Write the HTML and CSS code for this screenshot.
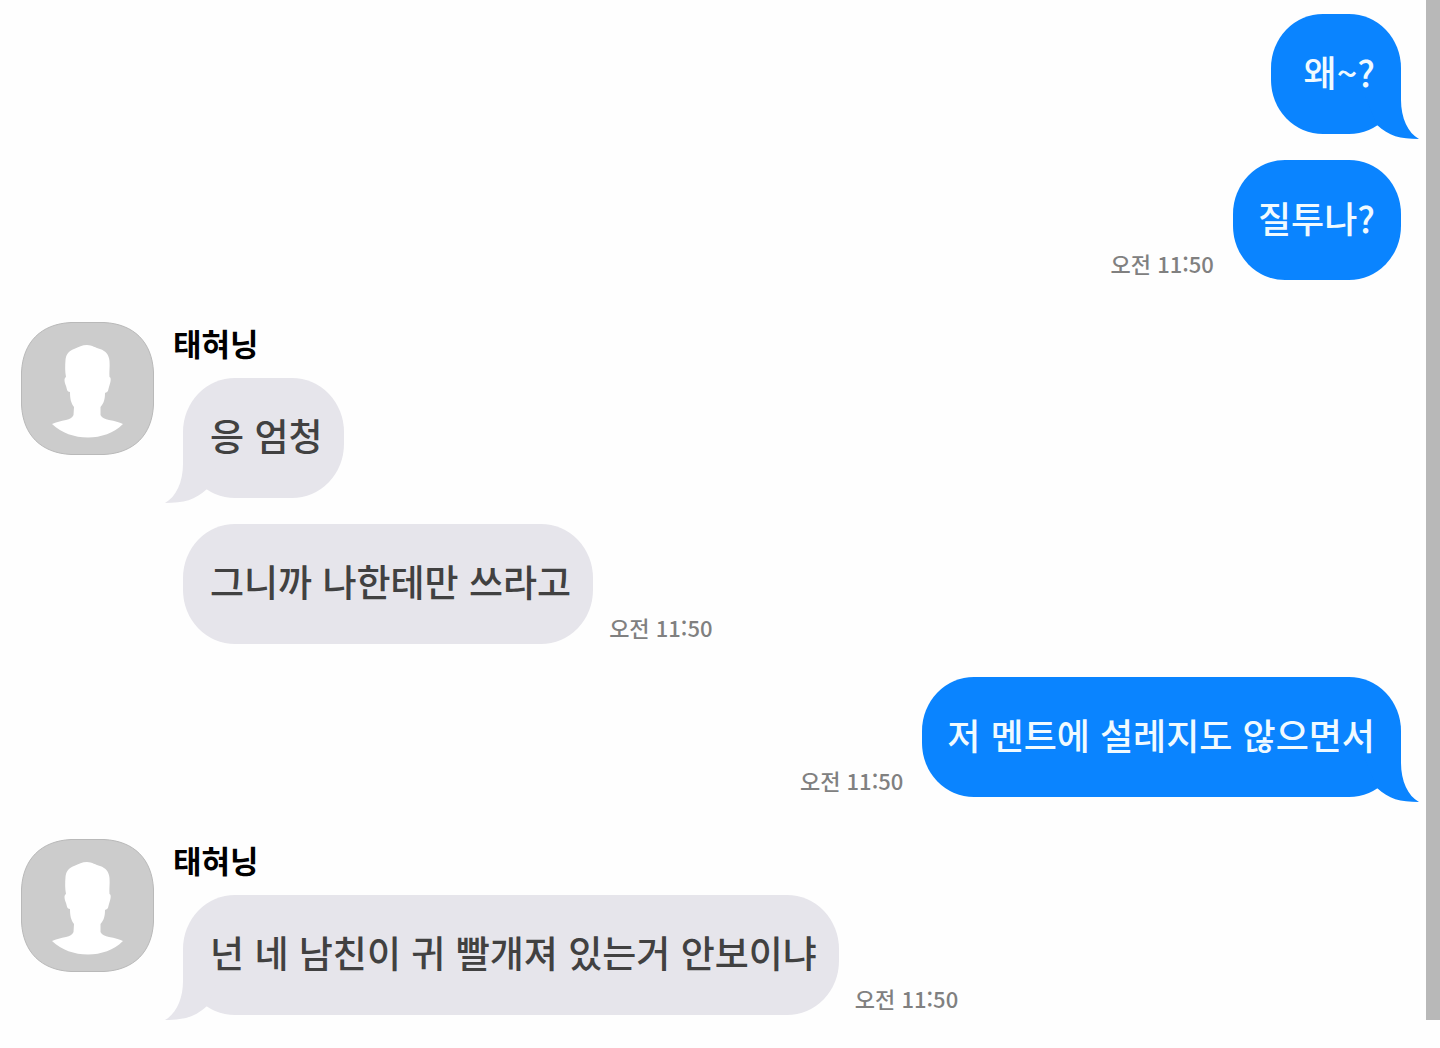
FILE: index.html
```html
<!DOCTYPE html>
<html lang="ko">
<head>
	<meta charset="UTF-8">
	<meta name="viewport" content="width=device-width, initial-scale=1">
	<title>태혀닝</title>
	<link rel="stylesheet" href="styles.css">
</head>
<body>

<!-- shared shapes -->
<svg class="defs" aria-hidden="true">
	<symbol id="tail" viewBox="0 0 54 64">
		<path d="M0 0H36V24C36 42 43 57 54 63C35 63 24 60 12 49L0 20Z"/>
	</symbol>
	<symbol id="person" viewBox="0 0 133 133">
		<path fill="#ccc" stroke="#b9b9b9" d="M50 .5H83C113 2 131 20 132.500 50V83C131 113 113 131 83 132.500H50C20 131 2 113 .5 83V50C2 20 20 2 50 .5Z"/>
		<path fill="#fff" d="M66 23C71 23 75 26 79 27C85 29 88 33 88.500 39C89 45 88 50 88.500 55C91 56 89 62 88 65C87 69 87 70 84 71C84 77 83 81 79.500 85V93C81 96 84 97 88 98C94 99 98 100 102 102C93 111 80 115.500 67 115.500C53 115.500 41 111 31 102C35 100 40 99 45 98C49 97 51 96 52.500 93L53 85C50 81 49 77 49 70C46 70 46 67 45 64C43 59 43 56 45 55C44 50 44 44 44.500 38C45 32 48 29 53 27C58 25 61 23 66 23Z"/>
	</symbol>
</svg>

<main class="chat">
	<section class="group sent">
		<div class="row">
			<p class="bubble">왜~?<svg class="tail"><use href="#tail"/></svg></p>
		</div>
		<div class="row">
			<p class="bubble">질투나?</p>
			<time class="time" datetime="11:50">오전 11:50</time>
		</div>
	</section>

	<section class="group received">
		<svg class="avatar" role="img" aria-label="태혀닝"><use href="#person"/></svg>
		<div class="messages">
			<h2 class="name">태혀닝</h2>
			<div class="row">
				<p class="bubble">응 엄청<svg class="tail"><use href="#tail"/></svg></p>
			</div>
			<div class="row">
				<p class="bubble">그니까 나한테만 쓰라고</p>
				<time class="time" datetime="11:50">오전 11:50</time>
			</div>
		</div>
	</section>

	<section class="group sent">
		<div class="row">
			<p class="bubble">저 멘트에 설레지도 않으면서<svg class="tail"><use href="#tail"/></svg></p>
			<time class="time" datetime="11:50">오전 11:50</time>
		</div>
	</section>

	<section class="group received">
		<svg class="avatar" role="img" aria-label="태혀닝"><use href="#person"/></svg>
		<div class="messages">
			<h2 class="name">태혀닝</h2>
			<div class="row">
				<p class="bubble">넌 네 남친이 귀 빨개져 있는거 안보이냐<svg class="tail"><use href="#tail"/></svg></p>
				<time class="time" datetime="11:50">오전 11:50</time>
			</div>
		</div>
	</section>
</main>

</body>
</html>
```
FILE: styles.css
```css
* {
	box-sizing: border-box;
}
body {
	margin: 0;
	background: #fefefe;
	font-family: "Noto Sans CJK KR", sans-serif;
	font-weight: 500;
}
.defs {
	display: none;
}
.chat {
	padding: 14px 25px 5px 21px;
	border-right: 14px solid #b8b8b8;
}
.group + .sent {
	margin-top: 33px;
}
.group + .received {
	margin-top: 42px;
}
.received {
	display: flex;
	align-items: flex-start;
	gap: 19px;
}
.avatar {
	flex: none;
	width: 133px;
	height: 133px;
}
.name {
	margin: 0 0 14px;
	color: #000;
	font-size: 31px;
	font-weight: 700;
	line-height: 42px;
}
.row {
	display: flex;
	align-items: flex-end;
	gap: 16px;
}
.row + .row {
	margin-top: 26px;
}
.sent .row {
	flex-direction: row-reverse;
	gap: 19px;
}
.received .row {
	margin-left: 10px;
}
/* own stacking context, so the tail stays behind the text */
.bubble {
	position: relative;
	isolation: isolate;
	min-width: 130px;
	margin: 0;
	padding: 32px 22px 38px 27px;
	border-radius: 52px / 54px;
	font-size: 37px;
	line-height: 50px;
}
.sent .bubble {
	padding-left: 25px;
	padding-right: 26px;
	background: #0a84ff;
	color: #f0faff;
	font-size: 36px;
	text-align: right;
}
.received .bubble {
	background: #e6e5eb;
	color: #414141;
}
.tail {
	position: absolute;
	z-index: -1;
	bottom: -6px;
	width: 54px;
	height: 64px;
}
.sent .tail {
	right: -18px;
	fill: #0a84ff;
}
.received .tail {
	left: -18px;
	fill: #e6e5eb;
	transform: scaleX(-1);
}
.time {
	flex: none;
	color: #808080;
	font-size: 22px;
	font-weight: 500;
	line-height: 34px;
}
```
